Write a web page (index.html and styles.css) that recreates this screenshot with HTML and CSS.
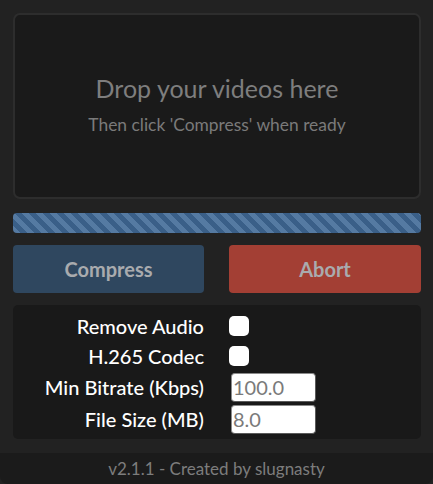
FILE: index.html
```html
<!DOCTYPE html>
<html>
<head>
<meta charset="utf-8">
<link rel="stylesheet" href="styles.css">
</head>
<body>
<div class="app">
  <div class="dropzone">
    <div class="drop-title">Drop your videos here</div>
    <div class="drop-sub">Then click 'Compress' when ready</div>
  </div>
  <div class="progress"></div>
  <div class="actions">
    <button class="btn btn-compress">Compress</button>
    <button class="btn btn-abort">Abort</button>
  </div>
  <div class="settings">
    <label class="lbl">Remove Audio</label>
    <div class="ctl"><input type="checkbox" class="check"></div>
    <label class="lbl">H.265 Codec</label>
    <div class="ctl"><input type="checkbox" class="check"></div>
    <label class="lbl">Min Bitrate (Kbps)</label>
    <div class="ctl"><input type="text" class="num" value="100.0"></div>
    <label class="lbl">File Size (MB)</label>
    <div class="ctl"><input type="text" class="num" value="8.0"></div>
  </div>
</div>
<footer class="footer">v2.1.1 - Created by slugnasty</footer>
</body>
</html>
```
FILE: styles.css
```css
html, body {
  margin: 0;
  padding: 0;
}
body {
  background: #222222;
  font-family: Lato, "Noto Sans", sans-serif;
  height: 484px;
  overflow: hidden;
  display: flex;
  flex-direction: column;
}
.app {
  padding: 13px 12px 0 13px;
  display: flex;
  flex-direction: column;
}
.dropzone {
  height: 186px;
  box-sizing: border-box;
  border: 2px solid #2d2d2d;
  border-radius: 7px;
  background: #1a1a1a;
  display: flex;
  flex-direction: column;
  align-items: center;
  justify-content: center;
}
.drop-title {
  color: #7e7e7e;
  font-size: 25px;
  line-height: 30px;
  margin-top: -4px;
}
.drop-sub {
  color: #7a7a7a;
  font-size: 17.4px;
  line-height: 20px;
  margin-top: 12px;
}
.progress {
  margin-top: 14px;
  height: 20px;
  border-radius: 4px;
  background: repeating-linear-gradient(45deg, #557aa2 0 5px, #3a5f88 5px 10px);
}
.actions {
  margin-top: 12px;
  display: grid;
  grid-template-columns: 191px 192px;
  justify-content: space-between;
}
.btn {
  height: 48px;
  border: none;
  border-radius: 4px;
  font-family: Lato, "Noto Sans", sans-serif;
  font-weight: bold;
  font-size: 20px;
  color: #a9abae;
  padding: 0;
}
.btn-compress {
  background: #2f475f;
}
.btn-abort {
  background: #a33f34;
}
.settings {
  margin-top: 12px;
  background: #191919;
  border-radius: 5px;
  padding: 6px 0 4px 0;
  display: grid;
  grid-template-columns: 191px 1fr;
  grid-template-rows: 30px 30px 32px 32px;
  column-gap: 25px;
  align-items: center;
}
.lbl {
  text-align: right;
  color: #ffffff;
  font-size: 20px;
  font-weight: 500;
}
.ctl {
  display: flex;
  align-items: center;
}
.check {
  appearance: none;
  -webkit-appearance: none;
  margin: 0;
  width: 20px;
  height: 20px;
  border-radius: 5px;
  background: #ffffff;
  border: none;
}
.num {
  margin: 0 0 0 2px;
  width: 85px;
  height: 29px;
  box-sizing: border-box;
  border: 1px solid #8a8a8a;
  border-right-color: #5a5a5a;
  border-bottom-color: #5a5a5a;
  border-radius: 4px;
  background: #ffffff;
  color: #7a7a7a;
  font-family: Lato, "Noto Sans", sans-serif;
  font-size: 20px;
  padding: 0 1px;
}
.footer {
  margin-top: 14px;
  flex: 1;
  background: #1b1b1b;
  border-radius: 0 0 8px 8px;
  color: #7d7d7d;
  font-size: 17px;
  text-align: center;
  line-height: 31px;
}
```
